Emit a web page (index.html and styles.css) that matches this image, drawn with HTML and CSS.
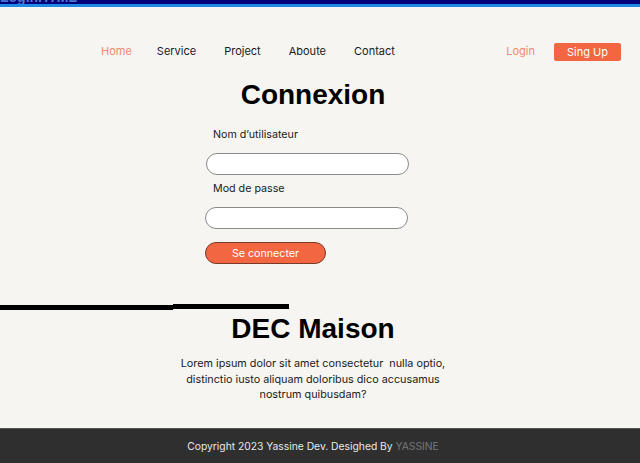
FILE: index.html
```html
<!DOCTYPE html>
<html lang="fr">
<head>
<meta charset="utf-8">
<title>LoginHTML</title>
<link rel="stylesheet" href="styles.css">
</head>
<body>
<div class="topbar"><span class="topbar-title">LoginHTML</span></div>
<div class="page">
  <nav class="nav">
    <ul class="nav-links">
      <li class="nav-item-home"><a class="nav-link active" href="#">Home</a></li>
      <li><a class="nav-link" href="#">Service</a></li>
      <li><a class="nav-link" href="#">Project</a></li>
      <li><a class="nav-link" href="#">Aboute</a></li>
      <li><a class="nav-link" href="#">Contact</a></li>
    </ul>
    <div class="nav-auth">
      <a class="login-link" href="#">Login</a>
      <a class="signup-btn" href="#">Sing Up</a>
    </div>
  </nav>

  <h1 class="title">Connexion</h1>
  <form class="form">
    <label class="label">Nom d’utilisateur</label>
    <input class="input" type="text">
    <label class="label label-2">Mod de passe</label>
    <input class="input input-2" type="password">
    <button class="submit" type="button">Se connecter</button>
  </form>

  <div class="bar"><span class="bar-a"></span><span class="bar-b"></span></div>

  <h2 class="title title-2">DEC Maison</h2>
  <p class="intro">Lorem ipsum dolor sit amet consectetur&nbsp; nulla optio,<br>distinctio iusto aliquam doloribus dico accusamus<br>nostrum quibusdam?</p>
</div>
<footer class="footer">
  <p>Copyright 2023 Yassine Dev. Desighed By <span class="footer-name">YASSINE</span></p>
</footer>
</body>
</html>
```

FILE: styles.css
```css
* { box-sizing: border-box; }
html, body { margin: 0; padding: 0; }
body {
  background: #f6f5f1;
  font-family: Inter, "Noto Sans", sans-serif;
  color: #222;
  height: 463px;
  overflow: hidden;
  display: flex;
  flex-direction: column;
}
.topbar {
  height: 7px;
  background: #000078;
  border-bottom: 3px solid #1e8ae6;
  overflow: hidden;
}
.topbar-title {
  display: block;
  margin-top: -10px;
  font-family: "Liberation Sans", sans-serif;
  font-weight: bold;
  font-size: 14px;
  color: #4c78d0;
  line-height: 14px;
}
.page {
  flex: 1;
  padding-right: 14px;
}
.nav {
  display: flex;
  justify-content: space-between;
  align-items: center;
  margin-top: 36px;
  height: 18px;
  padding: 0 5px 0 101px;
}
.nav-links {
  display: flex;
  gap: 28px;
  list-style: none;
  margin: 0;
  padding: 0;
}
.nav-item-home { margin-right: -3px; }
.nav-link {
  color: #1a1a1a;
  text-decoration: none;
  font-size: 11px;
  line-height: 14px;
  display: block;
  margin-top: -3px;
}
.nav-link.active { color: #f4896b; }
.nav-auth {
  display: flex;
  align-items: center;
  gap: 19px;
}
.login-link {
  color: #f4896b;
  text-decoration: none;
  font-size: 11px;
  line-height: 14px;
  margin-top: -3px;
}
.signup-btn {
  display: block;
  width: 67px;
  height: 18px;
  line-height: 18px;
  text-align: center;
  background: #f26641;
  color: #fff;
  border-radius: 2px;
  text-decoration: none;
  font-size: 11px;
}
.title {
  font-family: "Liberation Sans", Arial, sans-serif;
  font-weight: bold;
  font-size: 28px;
  line-height: 32px;
  color: #000;
  text-align: center;
  margin: 18px 0 0;
}
.form {
  display: flex;
  flex-direction: column;
  align-items: flex-start;
  margin-left: 205px;
  width: 204px;
}
.label {
  font-size: 10.7px;
  line-height: 14px;
  margin: 17px 0 0 8px;
  color: #1a1a1a;
}
.label-2 { margin-top: 7px; }
.input {
  width: 203px;
  height: 22px;
  margin: 11px 0 0 1px;
  border: 1px solid #8a8a8a;
  border-radius: 11px;
  background: #fff;
  outline: none;
}
.input-2 { margin-left: 0; }
.submit {
  width: 121px;
  height: 22px;
  margin-top: 13px;
  background: #f26641;
  border: 1px solid #7a3a28;
  border-radius: 11px;
  color: #fff;
  font-family: Inter, sans-serif;
  font-size: 10.7px;
  padding: 0;
}
.bar {
  display: flex;
  align-items: flex-start;
  margin-top: 40px;
  height: 6px;
}
.bar-a {
  width: 173px;
  height: 5px;
  margin-top: 1px;
  background: #000;
}
.bar-b {
  width: 116px;
  height: 5px;
  background: #000;
}
.title-2 { margin-top: 3px; }
.intro {
  font-size: 10.8px;
  line-height: 15.5px;
  text-align: center;
  margin: 11px 0 0;
  color: #1a1a1a;
}
.footer {
  height: 35px;
  background: #2f2f2f;
  border-top: 1px solid #555;
  display: flex;
  align-items: center;
  padding-right: 14px;
  justify-content: center;
}
.footer p {
  margin: 0;
  color: #e8e8e8;
  font-size: 10.3px;
}
.footer-name { color: #777; }
```
